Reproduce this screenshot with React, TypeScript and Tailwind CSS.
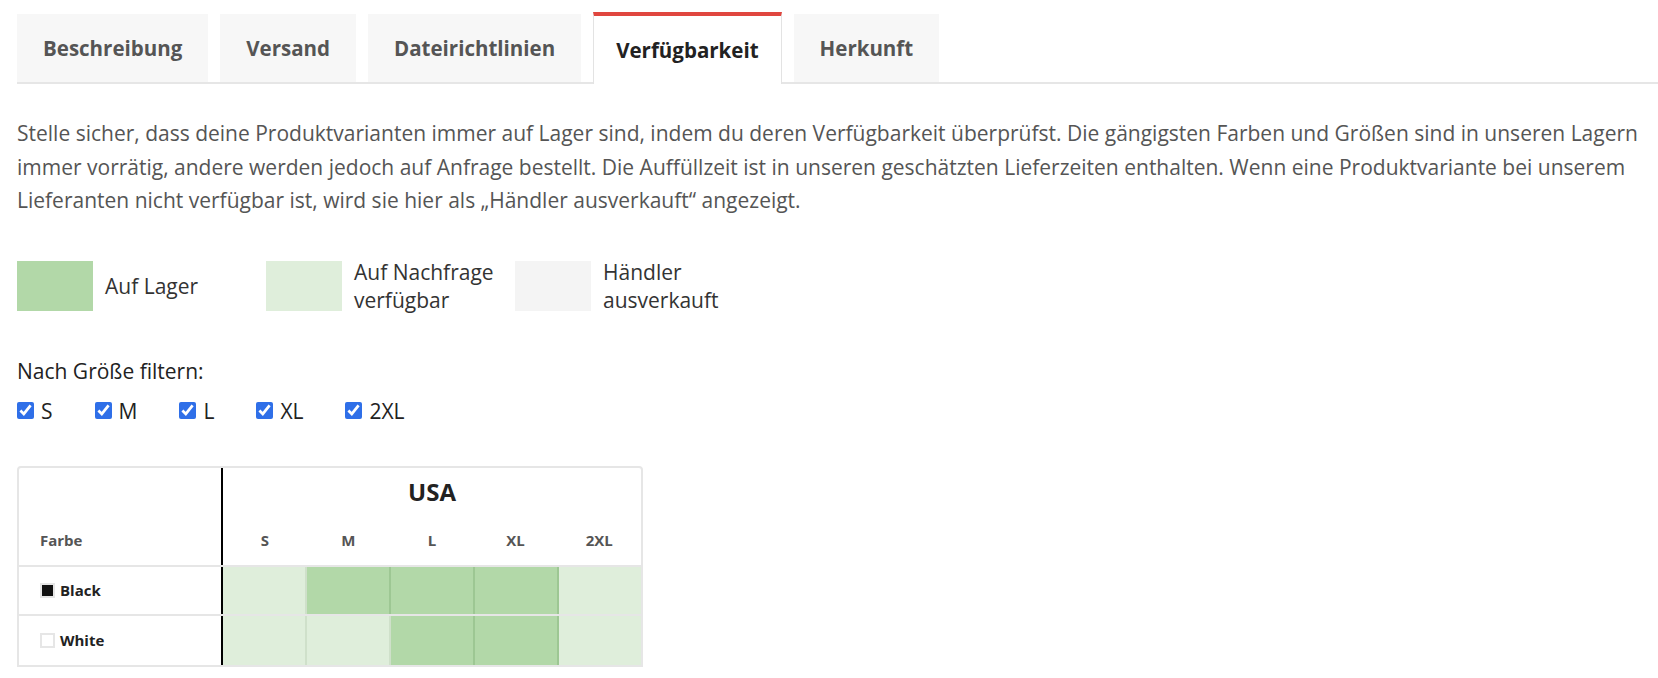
const tabs = ["Beschreibung", "Versand", "Dateirichtlinien", "Verfügbarkeit", "Herkunft"];
const sizes = ["S", "M", "L", "XL", "2XL"];

// 1 = auf Lager, 0 = auf Nachfrage
const rows = [
  { name: "Black", swatch: "bg-[#111]", stock: [0, 1, 1, 1, 0] },
  { name: "White", swatch: "bg-white", stock: [0, 0, 1, 1, 0] },
];

function Tabs() {
  return (
    <div className="ml-[17px] flex items-end gap-[12px] border-b-2 border-[#e6e6e6]">
      {tabs.map((t) =>
        t === "Verfügbarkeit" ? (
          <div
            key={t}
            className="-mb-[2px] flex h-[72px] items-center border-x border-t-4 border-x-[#e3e3e3] border-t-[#e0463f] bg-white px-[22px] text-[20.5px] font-bold text-[#222]"
          >
            {t}
          </div>
        ) : (
          <div
            key={t}
            className="flex h-[68px] items-center bg-[#f7f7f7] px-[26px] text-[20.5px] font-bold text-[#555]"
          >
            {t}
          </div>
        )
      )}
    </div>
  );
}

function Legend() {
  const items = [
    { color: "bg-[#b2d8a8]", label: "Auf Lager" },
    { color: "bg-[#dfeedb]", label: "Auf Nachfrage verfügbar" },
    { color: "bg-[#f4f4f4]", label: "Händler ausverkauft" },
  ];
  return (
    <div className="mt-[40px] flex items-center px-[17px]">
      {items.map((it) => (
        <div key={it.label} className="flex w-[249px] items-center gap-[12px]">
          <div className={`h-[50px] w-[76px] shrink-0 ${it.color}`} />
          <div className="w-[155px] text-[21px] leading-[28px] text-[#333]">{it.label}</div>
        </div>
      ))}
    </div>
  );
}

function Filter() {
  return (
    <div className="mt-[42px] px-[17px] text-[21px] text-[#222]">
      <div className="leading-[30px]">Nach Größe filtern:</div>
      <div className="mt-[12px] flex gap-[42px]">
        {sizes.map((s) => (
          <label key={s} className="flex items-center gap-[7px]">
            <input type="checkbox" defaultChecked className="h-[17px] w-[17px] accent-[#2f6fe8]" />
            <span className="leading-[26px]">{s}</span>
          </label>
        ))}
      </div>
    </div>
  );
}

function StockTable() {
  return (
    <div className="ml-[17px] mt-[42px] w-[626px] overflow-hidden rounded-t border-2 border-[#e6e6e6]">
      <div className="flex border-b-2 border-[#e6e6e6]">
        <div className="flex w-[204px] items-end border-r-2 border-r-black px-[21px] pb-[14px] text-[15px] font-bold text-[#555]">
          Farbe
        </div>
        <div className="flex-1">
          <div className="pt-[6px] text-center text-[24px] font-bold text-[#222]">USA</div>
          <div className="mt-[19px] flex pb-[14px]">
            {sizes.map((s) => (
              <div key={s} className="flex-1 text-center text-[15px] font-bold text-[#555]">
                {s}
              </div>
            ))}
          </div>
        </div>
      </div>
      {rows.map((r, ri) => (
        <div key={r.name} className={`flex h-[49px] ${ri === 0 ? "border-b-2 border-[#e6e6e6]" : ""}`}>
          <div className="flex w-[204px] items-center gap-[5px] border-r-2 border-r-black pl-[21px] text-[15px] font-bold text-[#222]">
            <span className={`inline-block h-[15px] w-[15px] border-2 border-[#e6e6e6] ${r.swatch}`} />
            {r.name}
          </div>
          <div className="flex flex-1">
            {r.stock.map((v, i) => (
              <div
                key={i}
                className={`flex-1 border-r-2 last:border-r-0 ${v ? "border-[#9dc793] bg-[#b2d8a8]" : "border-[#cfe0ca] bg-[#dfeedb]"}`}
              />
            ))}
          </div>
        </div>
      ))}
    </div>
  );
}

export default function App() {
  return (
    <div
      className="min-h-screen bg-white pt-[12px]"
      style={{ fontFamily: '"Open Sans", "Liberation Sans", sans-serif' }}
    >
      <Tabs />
      <p className="mt-[33px] px-[17px] text-[21px] leading-[33.5px] text-[#555]">
        Stelle sicher, dass deine Produktvarianten immer auf Lager sind, indem du deren Verfügbarkeit überprüfst. Die
        gängigsten Farben und Größen sind in unseren Lagern immer vorrätig, andere werden jedoch auf Anfrage bestellt.
        Die Auffüllzeit ist in unseren geschätzten Lieferzeiten enthalten. Wenn eine Produktvariante bei unserem
        Lieferanten nicht verfügbar ist, wird sie hier als „Händler ausverkauft“ angezeigt.
      </p>
      <Legend />
      <Filter />
      <StockTable />
    </div>
  );
}
